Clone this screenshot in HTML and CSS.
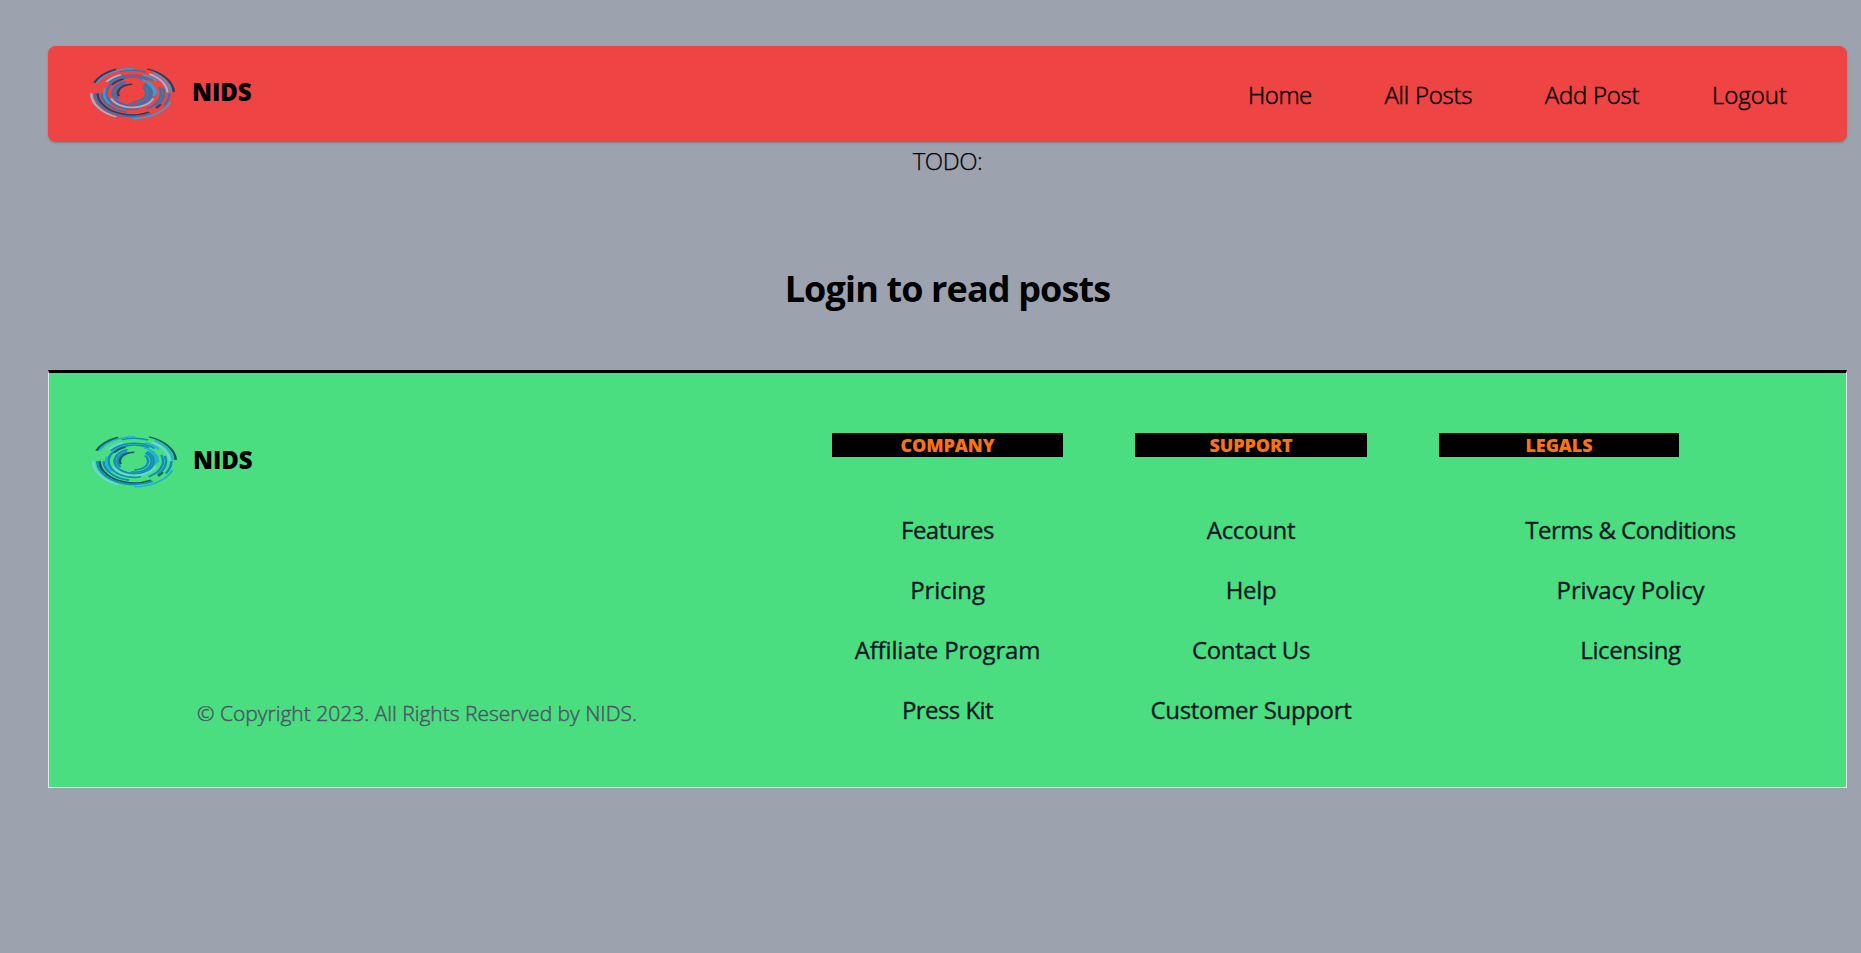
FILE: index.html
```html
<!DOCTYPE html>
<html lang="en">
<head>
<meta charset="utf-8">
<title>NIDS</title>
<link rel="stylesheet" href="styles.css">
</head>
<body>
<svg class="defs" width="0" height="0" aria-hidden="true">
  <symbol id="rings" viewBox="0 0 86 54">
    <g fill="none" stroke-width="2.5" transform="translate(43.3 26.2) scale(.99 .62)">
      <g class="c-blue">
        <circle r="37" pathLength="360" stroke-dasharray="42 318" transform="rotate(-110)"/>
        <circle r="37.5" pathLength="360" stroke-dasharray="120 240" transform="rotate(60)"/>
        <circle r="37.5" pathLength="360" stroke-dasharray="32 328"/>
        <circle r="31" pathLength="360" stroke-dasharray="80 280" transform="rotate(100)"/>
        <circle r="29" pathLength="360" stroke-dasharray="100 260" transform="rotate(215)"/>
        <circle r="26" pathLength="360" stroke-dasharray="230 130" transform="rotate(75)"/>
        <circle r="32" pathLength="360" stroke-dasharray="58 302" transform="rotate(-15)"/>
        <circle r="29" pathLength="360" stroke-dasharray="80 280" transform="rotate(-20)"/>
        <circle r="20" pathLength="360" stroke-dasharray="300 60" transform="rotate(-50)"/>
        <circle r="17.5" pathLength="360" stroke-dasharray="150 210" transform="rotate(-50)"/>
        <circle r="17" pathLength="360" stroke-dasharray="100 260" transform="rotate(145)"/>
        <circle r="14" pathLength="360" stroke-dasharray="130 230" transform="rotate(-40)"/>
      </g>
      <g class="c-sky">
        <circle r="39.5" pathLength="360" stroke-dasharray="66 294" transform="rotate(205)"/>
        <circle r="39" pathLength="360" stroke-dasharray="56 304" transform="rotate(-58)"/>
        <circle r="41" pathLength="360" stroke-dasharray="70 290" transform="rotate(20)"/>
        <circle r="28.5" pathLength="360" stroke-dasharray="50 310" transform="rotate(145)"/>
        <circle r="31.5" pathLength="360" stroke-dasharray="32 328" transform="rotate(-70)"/>
        <circle r="24" pathLength="360" stroke-dasharray="70 290" transform="rotate(-65)"/>
        <circle r="22" pathLength="360" stroke-dasharray="58 302" transform="rotate(-45)"/>
        <circle r="35" pathLength="360" stroke-dasharray="22 338" transform="rotate(160)"/>
      </g>
      <g class="c-dark">
        <circle r="42" pathLength="360" stroke-dasharray="43 317" transform="rotate(204)"/>
        <circle r="42" pathLength="360" stroke-dasharray="66 294" transform="rotate(-69)"/>
        <circle r="35" pathLength="360" stroke-dasharray="119 241" transform="rotate(61)"/>
        <circle r="34" pathLength="360" stroke-dasharray="13 347" transform="rotate(32)"/>
        <circle r="24.5" pathLength="360" stroke-dasharray="36 324" transform="rotate(213)"/>
        <circle r="14.5" pathLength="360" stroke-dasharray="110 250" transform="rotate(160)"/>
      </g>
      <g class="c-pale">
        <circle r="41.5" pathLength="360" stroke-dasharray="67 293" transform="rotate(113)"/>
        <circle r="35.5" pathLength="360" stroke-dasharray="59 301" transform="rotate(-61)"/>
        <circle r="32" pathLength="360" stroke-dasharray="34 326" transform="rotate(215)"/>
        <circle r="23" pathLength="360" stroke-dasharray="136 224" transform="rotate(22)"/>
      </g>
    </g>
  </symbol>
</svg>
<div class="page">
  <header class="navbar">
    <a class="brand"><svg class="logo logo-nav"><use href="#rings"/></svg><span class="brand-name">NIDS</span></a>
    <nav class="menu"><a class="tight">Home</a><a>All Posts</a><a>Add Post</a><a class="loose">Logout</a></nav>
  </header>
  <main class="content">
    <p class="todo">TODO:</p>
    <h1 class="title">Login to read posts</h1>
  </main>
  <footer class="footer">
    <section class="about">
      <a class="brand"><svg class="logo logo-foot"><use href="#rings"/></svg><span class="brand-name">NIDS</span></a>
      <p class="copy">© Copyright 2023. All Rights Reserved by NIDS.</p>
    </section>
    <section class="col"><h3>COMPANY</h3><ul><li class="tight">Features</li><li class="loose">Pricing</li><li class="loose">Affiliate Program</li><li class="tight">Press Kit</li></ul></section>
    <section class="col"><h3>SUPPORT</h3><ul><li>Account</li><li>Help</li><li>Contact Us</li><li>Customer Support</li></ul></section>
    <section class="col legals"><h3>LEGALS</h3><ul><li class="tight">Terms &amp; Conditions</li><li class="loose">Privacy Policy</li><li>Licensing</li></ul></section>
  </footer>
</div>
</body>
</html>
```
FILE: styles.css
```css
* { box-sizing: border-box; margin: 0; padding: 0; }
body { background: #9ca3af; color: #000; font: 300 24px/36px "Open Sans", "Noto Sans", sans-serif; }
.defs { position: absolute; }
.page { margin: 46px 14px 0 48px; }
.navbar { height: 96px; display: flex; justify-content: space-between; background: #ef4444; border-radius: 8px; padding: 0 60px 0 41px; box-shadow: 0 1px 3px rgba(0,0,0,.1), 0 1px 2px rgba(0,0,0,.1); }
.brand { display: flex; gap: 17px; }
.navbar .brand { padding-top: 21px; }
.logo { width: 86px; height: 54px; }
.logo-nav { --dark: #323b5e; --blue: #3873ac; --sky: #4698c5; --pale: #a2b2d0; }
.logo-foot { --dark: #115a63; --blue: #128bbd; --sky: #25b1d0; --pale: #6bd6dc; }
.c-dark { stroke: var(--dark); }
.c-blue { stroke: var(--blue); }
.c-sky { stroke: var(--sky); }
.c-pale { stroke: var(--pale); }
.brand-name { font-weight: 800; line-height: 50px; letter-spacing: -.1px; }
.menu { display: flex; gap: 72.6px; line-height: 98px; letter-spacing: -.25px; -webkit-text-stroke: .45px; }
.menu .tight { letter-spacing: -.5px; }
.menu .loose { letter-spacing: 0; }
.content { text-align: center; }
.todo { line-height: 38px; letter-spacing: -.5px; -webkit-text-stroke: .25px; }
.title { font-size: 36px; line-height: 40px; font-weight: 700; padding: 89px 0 61px; letter-spacing: -.87px; }
.footer { height: 418px; background: #4ade80; border: 1px solid #e5e7eb; border-top: 3px solid #000; display: grid; grid-template-columns: 670px 231px 232px 383px; column-gap: 72px; padding: 60px 0 0 41px; }
.about { display: flex; flex-direction: column; justify-content: space-between; height: 294px; padding-top: 2px; }
.about .brand { padding-left: 1px; gap: 16px; }
.copy { font-size: 21px; line-height: 28px; color: #4b5563; text-align: center; letter-spacing: 0; padding-right: 16px; -webkit-text-stroke: .45px; }
.col h3 { background: #000; color: #f97316; font-size: 18px; line-height: 24px; font-weight: 800; text-align: center; letter-spacing: -.1px; }
.legals h3 { width: 240px; }
.col ul { list-style: none; margin-top: 55px; text-align: center; color: #111827; font-weight: 400; letter-spacing: -.32px; -webkit-text-stroke: .35px; }
.col li { line-height: 36px; margin-bottom: 24px; }
.col .tight { letter-spacing: -.55px; }
.col .loose { letter-spacing: -.15px; }
```
